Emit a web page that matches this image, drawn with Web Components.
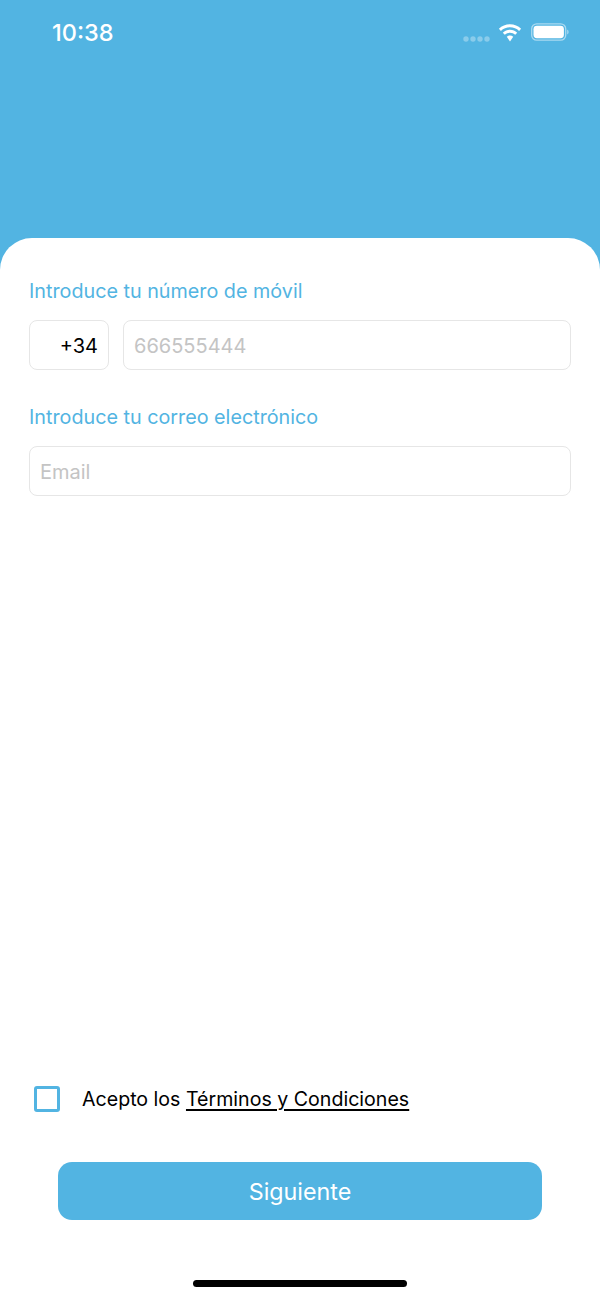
<!DOCTYPE html>
<html lang="es"><head><meta charset="utf-8"><style>
html,body{margin:0;padding:0;background:#fff}
body{width:600px;height:1299px;overflow:hidden;font-family:Inter,"Noto Sans",sans-serif}
</style></head><body>
<signup-screen></signup-screen>
<script>
function def(name, html){customElements.define(name,class extends HTMLElement{constructor(){super();this.attachShadow({mode:'open'}).innerHTML=html}})}
def('status-bar',`<style>:host{display:flex;height:66px;box-sizing:border-box;padding:20px 31px 0 52px;justify-content:space-between;color:#fff}
.t{font:500 23.500px/26px Inter,sans-serif;}
.i{display:flex;align-items:flex-start;height:26px}
.d{margin:15px 8px 0 0}.w{margin:4px 9px 0 0}.b{margin:3px 0 0}</style>
<span class="t">10:38</span><span class="i">
<svg class="d" width="28" height="8" viewBox="0 0 28 8"><g fill="#fff" opacity=".32"><circle cx="4" cy="4" r="2.700"/><circle cx="11" cy="4" r="2.700"/><circle cx="18" cy="4" r="2.700"/><circle cx="25" cy="4" r="2.700"/></g></svg>
<svg class="w" width="24" height="18" viewBox="0 0 24 18"><path fill="#fff" d="M12 3.300c3.500 0 6.700 1.300 9.100 3.600l2-2.200C20.200 2 16.300.3 12 .3S3.800 2 .9 4.700l2 2.200C5.300 4.600 8.500 3.300 12 3.300zM12 8.800c2 0 3.800.8 5.200 2l2-2.100C17.300 6.900 14.800 5.800 12 5.800s-5.300 1.100-7.200 2.900l2 2.100c1.400-1.200 3.200-2 5.200-2zM12 11.600c-1.200 0-2.300.5-3.200 1.200L12 17.400l3.200-4.600c-.9-.7-2-1.200-3.200-1.200z"/></svg>
<svg class="b" width="38" height="18" viewBox="0 0 38 18"><rect x=".7" y=".8" width="34" height="16.400" rx="5" fill="none" stroke="#fff" stroke-opacity=".5" stroke-width="1.300"/><rect x="2.500" y="2.800" width="30.400" height="12.400" rx="3.400" fill="#fff"/><path d="M36.200 6.500v5c.9-.4 1.400-1.400 1.400-2.500s-.5-2.100-1.400-2.500z" fill="#fff" fill-opacity=".5"/></svg>
</span>`);
def('field-label',`<style>:host{display:block;color:#52b4e2;font:400 19.750px/24px Inter,sans-serif}</style><slot></slot>`);
def('text-box',`<style>:host{display:flex;align-items:center;box-sizing:border-box;height:50px;border:1px solid #e6e6e6;border-radius:8px;padding:1px 10px 0;font:400 20px/24px Inter,sans-serif;color:#c4c4c4}</style><slot></slot>`);
def('check-row',`<style>:host{display:flex;align-items:center;gap:22px;padding-left:5px;height:26px;font:400 19.600px/26px Inter,sans-serif;color:#000}
.c{width:26px;height:26px;box-sizing:border-box;border:3px solid #52b4e2;border-radius:3px}
u{text-decoration-thickness:2px;text-underline-offset:3px}</style><span class="c"></span><span>Acepto los <u>Términos y Condiciones</u></span>`);
def('primary-button',`<style>:host{display:flex;align-items:center;justify-content:center;box-sizing:border-box;padding-top:2px;height:58px;width:484px;background:#52b4e2;border-radius:14px;color:#fff;font:400 23.300px/30px Inter,sans-serif}</style><slot></slot>`);
def('signup-screen',`<style>:host{display:flex;flex-direction:column;height:1299px;background:#52b4e2}
.sheet{flex:1;margin-top:172px;background:#fff;border-radius:32px 32px 0 0;display:flex;flex-direction:column;padding:41px 29px 0}
.row{display:flex;gap:14px;margin-top:17px;margin-bottom:35px}
.code{width:80px;justify-content:flex-end;color:#000;padding-right:10px}
.grow{flex:1}
.mt{margin-top:17px}
.sp{flex:1}
.btn{display:flex;justify-content:center;margin-top:50px}
.bar{width:214px;height:7px;border-radius:4px;background:#000;align-self:center;margin:60px 0 12px}
</style><status-bar></status-bar><div class="sheet">
<field-label>Introduce tu número de móvil</field-label>
<div class="row"><text-box class="code">+34</text-box><text-box class="grow">666555444</text-box></div>
<field-label>Introduce tu correo electrónico</field-label>
<text-box class="mt">Email</text-box>
<div class="sp"></div>
<check-row></check-row>
<div class="btn"><primary-button>Siguiente</primary-button></div>
<div class="bar"></div></div>`);
</script></body></html>
